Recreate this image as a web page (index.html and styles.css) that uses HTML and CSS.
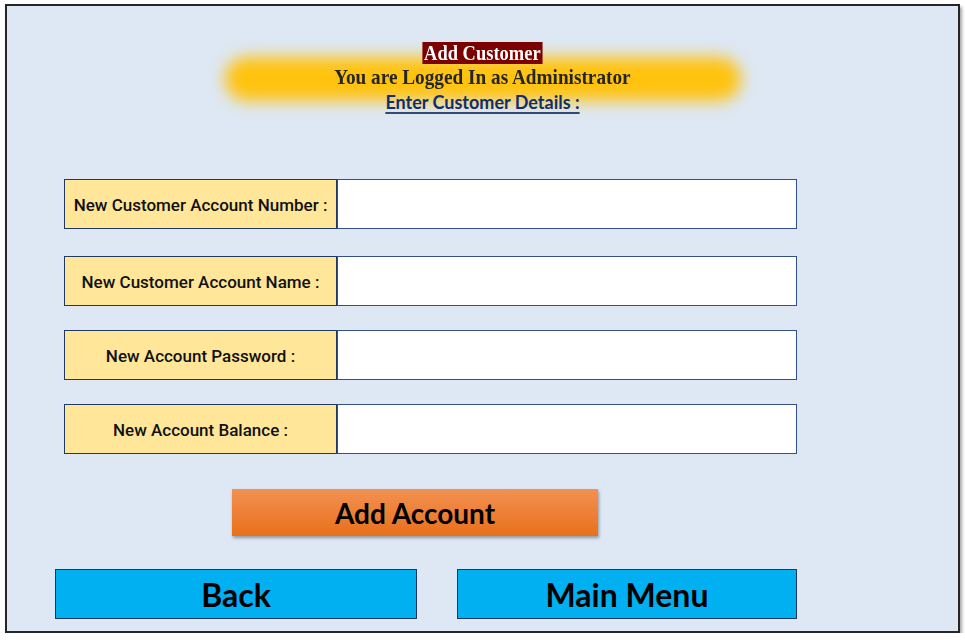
FILE: index.html
```html
<!DOCTYPE html>
<html>
<head>
<meta charset="utf-8">
<title>Add Customer</title>
<link rel="stylesheet" href="styles.css">
</head>
<body>
<div class="frame">
  <div class="header">
    <div class="glow"></div>
    <div class="title"><span>Add Customer</span></div>
    <div class="subtitle">You are Logged In as Administrator</div>
    <div class="details">Enter Customer Details :</div>
  </div>
  <div class="form">
    <div class="row first">
      <div class="label">New Customer Account Number :</div>
      <div class="input"></div>
    </div>
    <div class="row">
      <div class="label">New Customer Account Name :</div>
      <div class="input"></div>
    </div>
    <div class="row">
      <div class="label">New Account Password :</div>
      <div class="input"></div>
    </div>
    <div class="row">
      <div class="label">New Account Balance :</div>
      <div class="input"></div>
    </div>
  </div>
  <div class="add-wrap">
    <div class="add-btn">Add Account</div>
  </div>
  <div class="nav">
    <div class="nav-btn back">Back</div>
    <div class="nav-btn menu">Main Menu</div>
  </div>
</div>
</body>
</html>
```
FILE: styles.css
```css
html, body {
  margin: 0;
  padding: 0;
  background: #ffffff;
}

.frame {
  margin: 4px 0 0 5px;
  width: 955px;
  height: 629px;
  box-sizing: border-box;
  border: 2px solid #262626;
  background: #dde8f4;
  box-shadow: 2px 3px 3px rgba(0, 0, 0, 0.35);
  padding-top: 36px;
}

.header {
  position: relative;
  display: flex;
  flex-direction: column;
  align-items: center;
  height: 79px;
}

.glow {
  position: absolute;
  left: 218px;
  top: 15px;
  width: 516px;
  height: 44px;
  background: #ffc20e;
  border-radius: 22px;
  filter: blur(8px);
}

.title, .subtitle, .details {
  position: relative;
}

.title {
  height: 22px;
  font-family: "Liberation Serif", serif;
  font-weight: bold;
  font-size: 22px;
  line-height: 22px;
}

.title span {
  display: inline-block;
  background: #7b0000;
  color: #ffffff;
  padding: 0 2px;
  transform: scaleX(0.84);
}

.subtitle {
  height: 26px;
  font-family: "Liberation Serif", serif;
  font-weight: bold;
  font-size: 22px;
  line-height: 26px;
  color: #262626;
  transform: scaleX(0.875);
}

.details {
  font-family: Lato, "Open Sans", sans-serif;
  font-weight: bold;
  font-size: 18px;
  line-height: 24px;
  color: #112e6b;
  text-decoration: underline;
  text-decoration-thickness: 2px;
  text-underline-offset: 3px;
  text-decoration-color: #2e4a7d;
}

.form {
  margin-top: 58px;
  padding-left: 57px;
  display: flex;
  flex-direction: column;
  gap: 24px;
}

.row {
  display: flex;
  height: 50px;
}

.row.first {
  margin-bottom: 3px;
}

.label {
  width: 273px;
  box-sizing: border-box;
  border: 1.5px solid #203864;
  background: #ffe699;
  display: flex;
  align-items: center;
  justify-content: center;
  padding-top: 2px;
  font-family: Roboto, "Noto Sans", sans-serif;
  font-weight: 500;
  font-size: 17px;
  color: #111111;
}

.input {
  width: 460px;
  box-sizing: border-box;
  border: 1.5px solid #34508a;
  background: #ffffff;
}

.add-wrap {
  margin-top: 35px;
  padding-left: 225px;
}

.add-btn {
  width: 366px;
  height: 47px;
  background: linear-gradient(#f39152, #e8701b);
  box-shadow: 1px 2px 3px rgba(0, 0, 0, 0.35);
  display: flex;
  align-items: center;
  justify-content: center;
  font-family: Lato, "Open Sans", sans-serif;
  font-weight: bold;
  font-size: 28px;
  color: #000000;
}

.nav {
  margin-top: 33px;
  padding-left: 48px;
  display: flex;
  gap: 40px;
}

.nav-btn {
  height: 50px;
  box-sizing: border-box;
  border: 1.5px solid #1f3864;
  background: #00b0f0;
  display: flex;
  align-items: center;
  justify-content: center;
  font-family: Lato, "Open Sans", sans-serif;
  font-weight: bold;
  font-size: 32px;
  color: #000000;
}

.back {
  width: 362px;
}

.menu {
  width: 340px;
}
```
